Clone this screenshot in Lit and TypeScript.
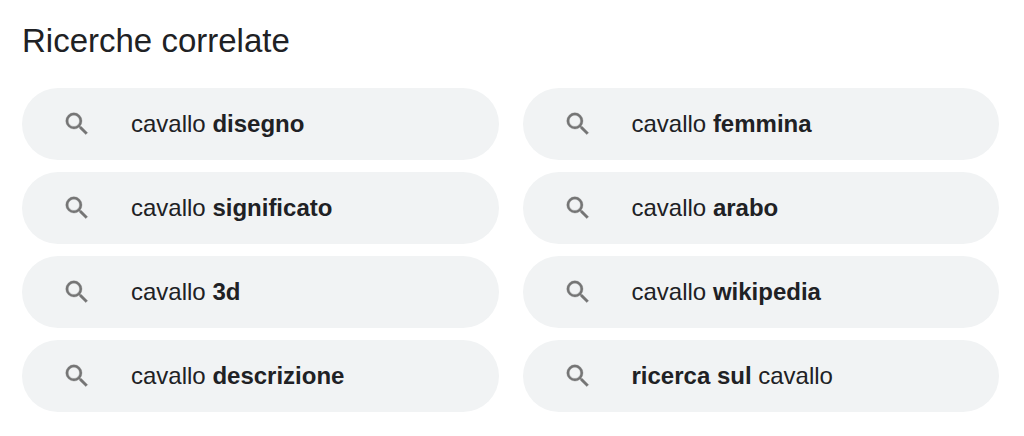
import { LitElement, html, css } from "lit";
import { customElement } from "lit/decorators.js";

type Part = { text: string; bold?: boolean };

const searches: Part[][] = [
  [{ text: "cavallo " }, { text: "disegno", bold: true }],
  [{ text: "cavallo " }, { text: "femmina", bold: true }],
  [{ text: "cavallo " }, { text: "significato", bold: true }],
  [{ text: "cavallo " }, { text: "arabo", bold: true }],
  [{ text: "cavallo " }, { text: "3d", bold: true }],
  [{ text: "cavallo " }, { text: "wikipedia", bold: true }],
  [{ text: "cavallo " }, { text: "descrizione", bold: true }],
  [{ text: "ricerca sul", bold: true }, { text: " cavallo" }],
];

@customElement("app-root")
export class AppRoot extends LitElement {
  static styles = css`
    :host {
      display: block;
      box-sizing: border-box;
      min-height: 100vh;
      padding: 21px 25px 24px 22px;
      background: #fff;
      color: #202124;
      font-family: "Liberation Sans", Arial, sans-serif;
    }
    .title {
      margin: 0 0 27px;
      font-size: 33px;
      line-height: 40px;
      font-weight: 400;
    }
    .grid {
      display: grid;
      grid-template-columns: 1fr 1fr;
      gap: 12px 24px;
      margin: 0;
      padding: 0;
      list-style: none;
    }
    .pill {
      display: flex;
      align-items: center;
      gap: 39px;
      min-height: 72px;
      box-sizing: border-box;
      padding: 0 40px;
      border-radius: 36px;
      background: #f1f3f4;
      color: inherit;
      font-size: 24px;
      line-height: 32px;
      text-decoration: none;
    }
    .icon {
      flex: none;
      width: 30px;
      height: 30px;
      fill: #757575;
      stroke: #757575;
      stroke-width: 0.25;
    }
  `;

  render() {
    return html`
      <h2 class="title">Ricerche correlate</h2>
      <ul class="grid">
        ${searches.map(
          (parts) => html`<li>
            <a class="pill" href="#">
              <svg class="icon" viewBox="0 0 24 24" aria-hidden="true">
                <path
                  d="M15.5 14h-.79l-.28-.27A6.47 6.47 0 0 0 16 9.5 6.5 6.5 0 1 0 9.5 16c1.61 0 3.09-.59 4.23-1.57l.27.28v.79l5 4.99L20.49 19l-4.99-5zm-6 0C7.01 14 5 11.99 5 9.5S7.01 5 9.5 5 14 7.01 14 9.5 11.99 14 9.5 14z"
                ></path>
              </svg>
              <span>${parts.map((p) => (p.bold ? html`<b>${p.text}</b>` : p.text))}</span>
            </a>
          </li>`
        )}
      </ul>
    `;
  }
}
